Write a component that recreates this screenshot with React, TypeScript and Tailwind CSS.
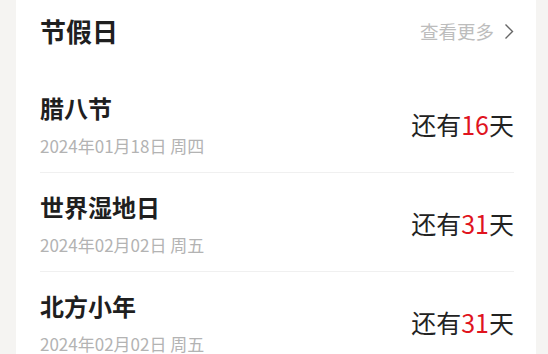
const holidays = [
  { name: "腊八节", date: "2024年01月18日 周四", days: 16 },
  { name: "世界湿地日", date: "2024年02月02日 周五", days: 31 },
  { name: "北方小年", date: "2024年02月02日 周五", days: 31 },
];

export default function App() {
  return (
    <div
      className="h-[354px] w-[548px] overflow-hidden bg-[#f5f4f2] pl-[16px] pr-[12px]"
      style={{ fontFamily: '"Noto Sans CJK SC", "Noto Sans", sans-serif' }}
    >
      <div className="h-full bg-white pl-[24px] pr-[22px]">
        {/* Header */}
        <div className="flex h-[74px] items-start justify-between pt-[13px]">
          <h2 className="text-[26px] font-bold leading-[36px] text-[#1f1f1f]">节假日</h2>
          <div className="flex items-center gap-[10px] pt-[1px] text-[18.5px] leading-[34px] text-[#bdbdbd]">
            <span>查看更多</span>
            <svg width="10" height="17" viewBox="0 0 10 17" fill="none" className="text-[#666]">
              <path d="M1.5 1.5 L8.5 8.5 L1.5 15.5" stroke="currentColor" strokeWidth="1.4" />
            </svg>
          </div>
        </div>

        {/* Holiday list */}
        <div>
          {holidays.map((h) => (
            <div
              key={h.name}
              className="flex items-center justify-between border-b border-[#f0f0f0] pt-[18px] pb-[14px]"
            >
              <div>
                <div className="text-[24px] font-bold leading-[32px] text-[#1f1f1f]">{h.name}</div>
                <div className="mt-[10px] text-[17px] leading-[24px] text-[#b3b3b3]">{h.date}</div>
              </div>
              <div className="pb-[3px] text-[25px] leading-[32px] text-[#222]">
                还有<span className="text-[#e0141e]">{h.days}</span>天
              </div>
            </div>
          ))}
        </div>
      </div>
    </div>
  );
}
